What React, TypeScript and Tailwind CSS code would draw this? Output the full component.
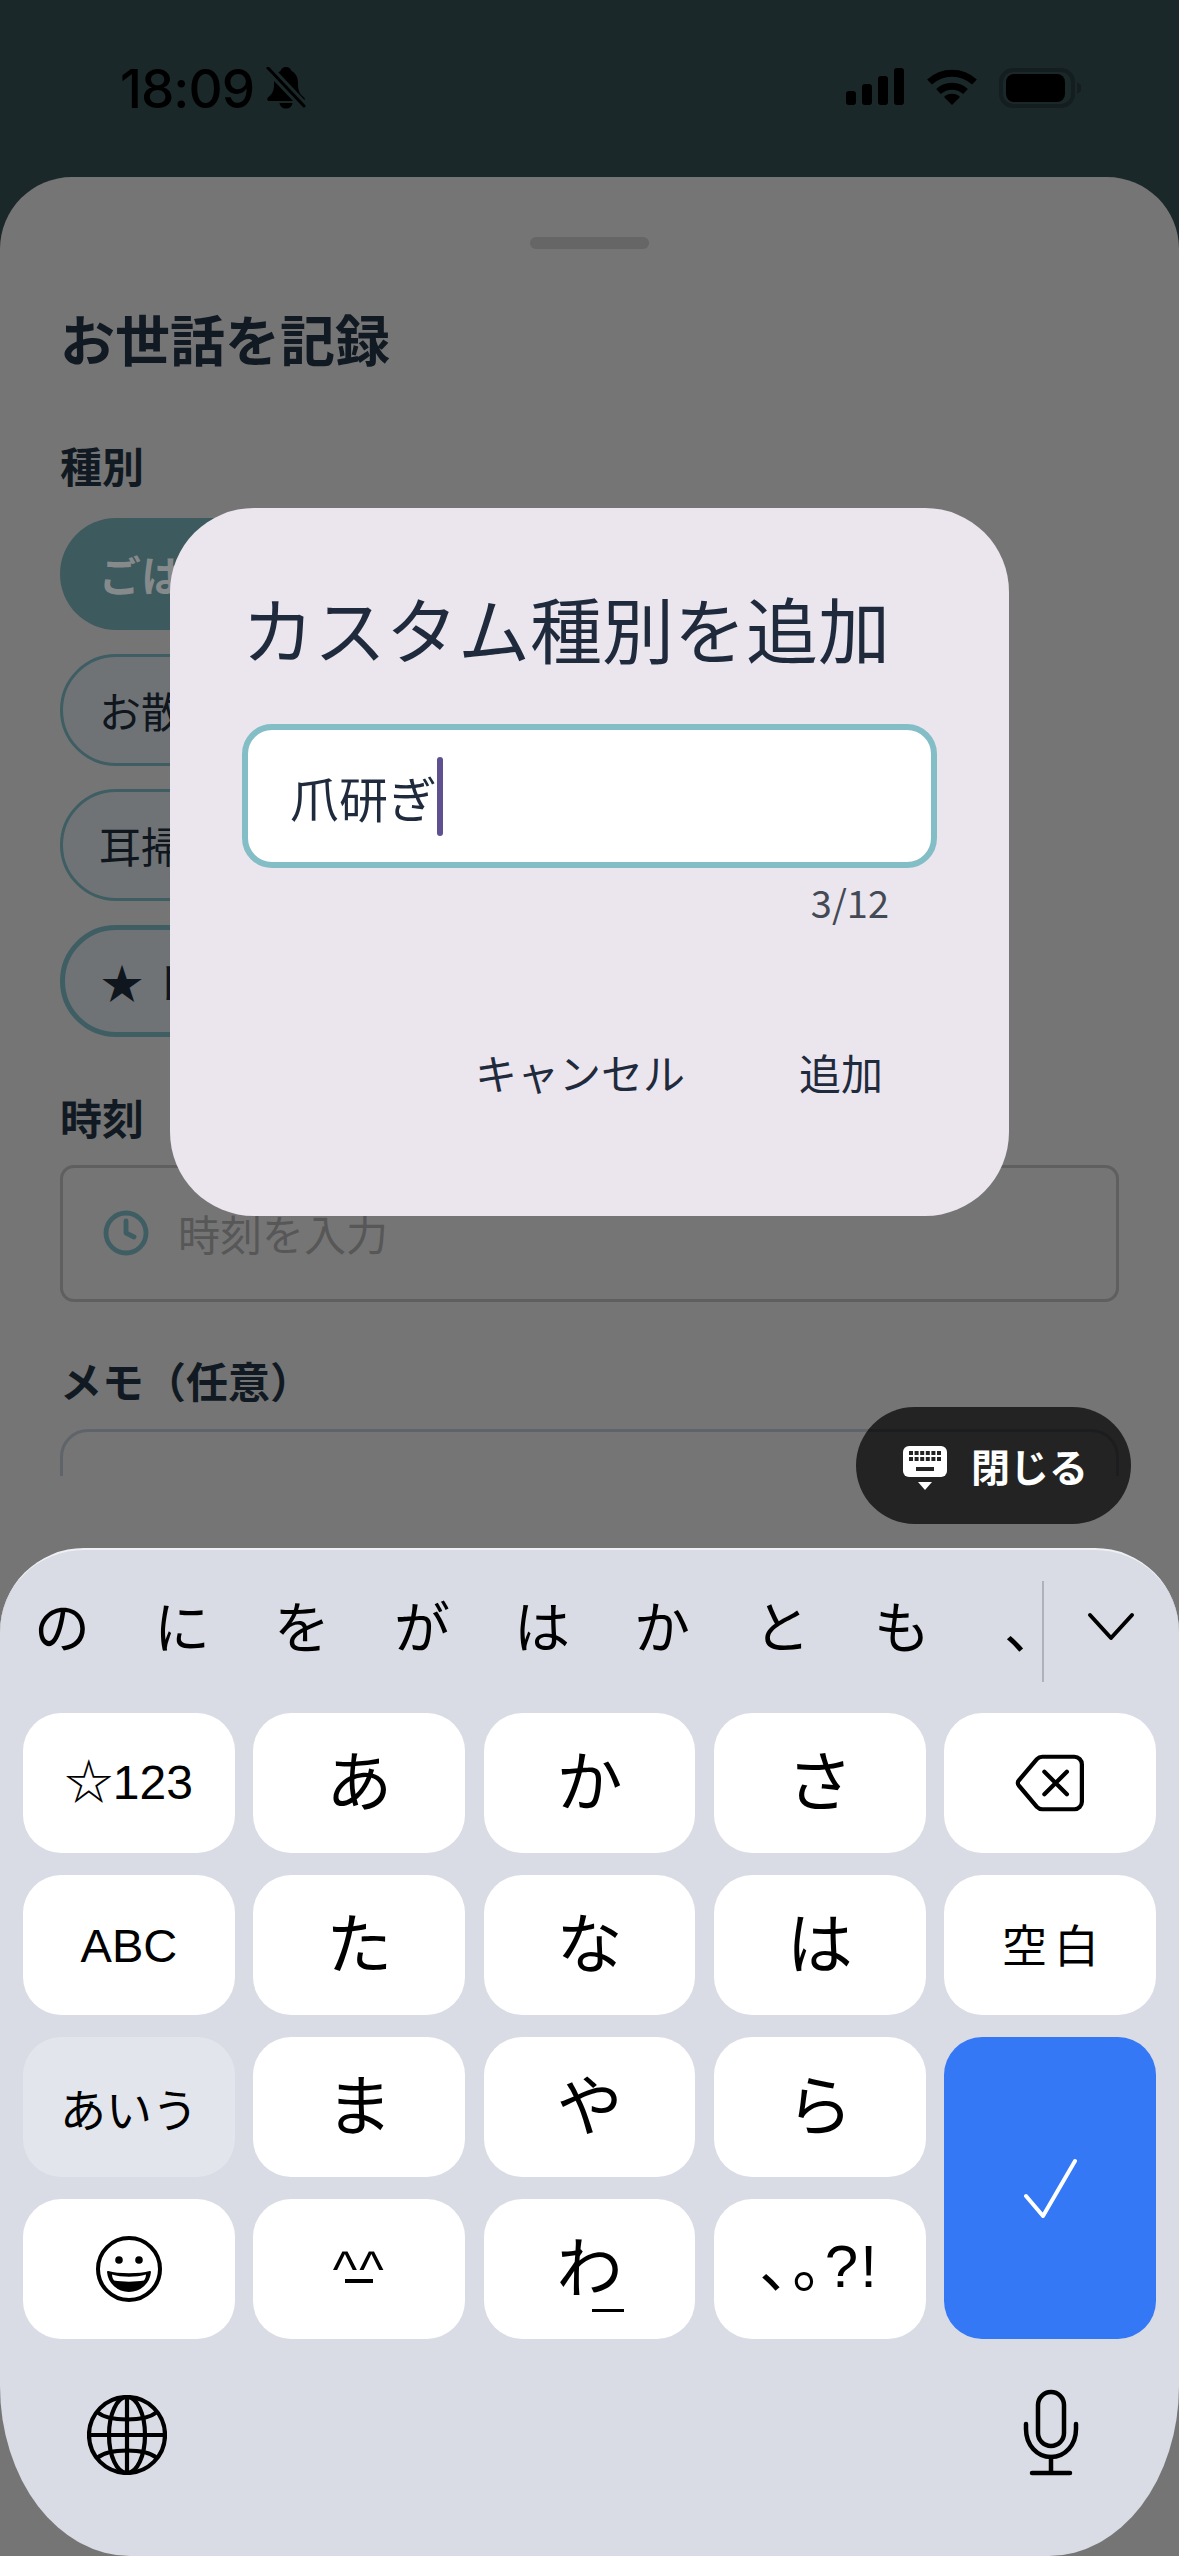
import React from "react";
import { Clock } from "lucide-react";

const jp = "font-['Noto_Sans_CJK_JP',sans-serif]";
const kb = "font-['Liberation_Sans','Noto_Sans_CJK_JP',sans-serif]";

function Chip({ children, filled, thick }: { children: React.ReactNode; filled?: boolean; thick?: boolean }) {
  const tone = filled
    ? "bg-[#3d5a5e] text-[#868a8b] font-bold pl-[39px]"
    : thick
      ? "bg-[#6f7375] border-[5px] border-[#3e5e63] text-[#10161d] pl-[36px]"
      : "bg-[#6f7375] border-[3px] border-[#3e5e63] text-[#10161d] pl-[36px]";
  return (
    <div className={`h-[112px] w-[420px] rounded-[56px] flex items-center text-[42px] leading-none ${tone}`}>
      {children}
    </div>
  );
}

function Key({ children, className = "" }: { children: React.ReactNode; className?: string }) {
  return (
    <div className={`h-[140px] rounded-[38px] flex items-center justify-center text-black ${className || "bg-white"}`}>
      {children}
    </div>
  );
}

const Kana = ({ c }: { c: string }) => <span className={`${jp} block -mt-[12px] text-[66px] leading-none`}>{c}</span>;

export default function App() {
  return (
    <div className={`${jp} relative w-[1179px] h-[2556px] overflow-hidden bg-[#1b2829] flex flex-col`}>
      {/* status bar */}
      <div className="h-[177px] shrink-0 flex justify-between items-start pt-[67px] pl-[120px] pr-[96px]">
        <div className="flex items-start gap-[12px]">
          <span className="font-['Inter',sans-serif] font-medium text-[53px] leading-[44px] tracking-[-1px] text-black">18:09</span>
          <svg width="40" height="42" viewBox="0 0 40 42">
            <path d="M20 0c-3 0-5 2-5.500 4C9 6.500 8 12 8 17c0 6-1 9.500-6 13.500-1.500 1.500-.5 3.500 1 3.500h34c1.500 0 2.500-2 1-3.500-5-4-6-7.500-6-13.500 0-5-1-10.500-6.500-13C25 2 23 0 20 0z" fill="#000" />
            <path d="M13.500 36a6.500 5.500 0 0 0 13 0z" fill="#000" />
            <path d="M1 0 L39 40" stroke="#1b2829" strokeWidth="9" />
            <path d="M2 1 L38 39" stroke="#000" strokeWidth="3" strokeLinecap="round" />
          </svg>
        </div>
        <div className="flex items-start gap-[21px] mt-[1px]">
          <svg width="58" height="38" viewBox="0 0 58 38" className="mr-[1px]">
            <rect x="0" y="23" width="10" height="14" rx="3" fill="#000" />
            <rect x="16" y="16" width="10" height="21" rx="3" fill="#000" />
            <rect x="32" y="8" width="10" height="29" rx="3" fill="#000" />
            <rect x="48" y="0" width="10" height="37" rx="3" fill="#000" />
          </svg>
          <svg width="52" height="38" viewBox="0 0 52 38">
            <path d="M3.500 14 A33 33 0 0 1 48.500 14" fill="none" stroke="#000" strokeWidth="7" />
            <path d="M12.500 23.500 A20 20 0 0 1 39.500 23.500" fill="none" stroke="#000" strokeWidth="7" />
            <path d="M26 37 L18 29 A11.500 11.500 0 0 1 34 29 Z" fill="#000" />
          </svg>
          <svg width="84" height="40" viewBox="0 0 84 40">
            <rect x="2" y="2" width="72" height="36" rx="12" fill="none" stroke="#141e20" strokeWidth="4" />
            <rect x="7" y="6" width="59" height="28" rx="8" fill="#000" />
            <path d="M78 14 L82 17 V23 L78 26 Z" fill="#141e20" />
          </svg>
        </div>
      </div>

      {/* sheet */}
      <div className="flex-1 rounded-t-[72px] bg-[#757575] flex flex-col overflow-hidden">
        <div className="h-[1299px] shrink-0 overflow-hidden px-[60px] flex flex-col">
          <div className="mt-[60px] mx-auto w-[119px] h-[12px] rounded-[6px] bg-[#666666] shrink-0" />
          <div className="mt-[63px] text-[55px] leading-[50px] font-bold text-[#111a22] shrink-0">お世話を記録</div>
          <div className="mt-[83px] text-[42px] leading-[40px] font-bold text-[#111a22] shrink-0">種別</div>
          <div className="mt-[33px] flex flex-col gap-[23.500px] shrink-0">
            <Chip filled>ごはん</Chip>
            <Chip>お散歩</Chip>
            <Chip>耳掃除</Chip>
            <Chip thick>★ トリミング</Chip>
          </div>
          <div className="mt-[60px] text-[42px] leading-[40px] font-bold text-[#111a22] shrink-0">時刻</div>
          <div className="mt-[28px] h-[137px] shrink-0 rounded-[14px] border-[3px] border-[#5f5f5f] flex items-center pl-[39px] gap-[28px]">
            <Clock size={48} strokeWidth={2.4} className="text-[#3e5e63]" />
            <span className="text-[42px] leading-none text-[#575757]">時刻を入力</span>
          </div>
          <div className="mt-[58px] text-[42px] leading-[40px] font-bold text-[#111a22] shrink-0">メモ（任意）</div>
          <div className="mt-[29px] h-[200px] shrink-0 rounded-[28px] border-[3px] border-[#5f636a]" />
        </div>

        <div className="h-[72px] shrink-0" />

        {/* keyboard */}
        <div className="flex-1 bg-[#d9dce5] border-t-2 border-[#eef0f4] [border-radius:84px_84px_130px_130px/84px_84px_170px_170px] flex flex-col">
          <div className="h-[163px] shrink-0 flex items-center pl-[2px] text-black">
            <div className="flex w-[1040px] pb-[16px]">
              {["の", "に", "を", "が", "は", "か", "と", "も"].map((c) => (
                <span key={c} className="w-[120px] text-center text-[56px] leading-none">{c}</span>
              ))}
              <span className="w-[80px] pl-[42px] text-[56px] leading-none">、</span>
            </div>
            <div className="w-[2px] h-[101px] bg-[#aeb2bc]" />
            <svg width="48" height="30" viewBox="0 0 48 30" className="ml-[43px] mb-[10px]">
              <path d="M3 3 L24 26 L45 3" fill="none" stroke="#000" strokeWidth="4" strokeLinecap="round" strokeLinejoin="round" />
            </svg>
          </div>

          <div className="px-[23px] grid grid-cols-5 gap-x-[18.500px] gap-y-[22px]">
            <Key><span className={`${kb} text-[48px] leading-none`}>☆123</span></Key>
            <Key><Kana c="あ" /></Key>
            <Key><Kana c="か" /></Key>
            <Key><Kana c="さ" /></Key>
            <Key>
              <svg width="72" height="60" viewBox="0 0 76 64">
                <path d="M30 4 H64 a8 8 0 0 1 8 8 V52 a8 8 0 0 1 -8 8 H30 a8 8 0 0 1 -6 -2.500 L5 35 a4 4 0 0 1 0 -6 L24 6.500 a8 8 0 0 1 6 -2.500Z" fill="none" stroke="#000" strokeWidth="4.500" />
                <path d="M32 20 L56 44 M56 20 L32 44" stroke="#000" strokeWidth="4.500" strokeLinecap="round" />
              </svg>
            </Key>

            <Key><span className={`${kb} text-[47px] leading-none`}>ABC</span></Key>
            <Key><Kana c="た" /></Key>
            <Key><Kana c="な" /></Key>
            <Key><Kana c="は" /></Key>
            <Key><span className="block -mt-[4px] pl-[8px] text-[45px] leading-none tracking-[7px]">空白</span></Key>

            <Key className="bg-[#e3e5ec]"><span className="text-[46px] leading-none">あいう</span></Key>
            <Key><Kana c="ま" /></Key>
            <Key><Kana c="や" /></Key>
            <Key><Kana c="ら" /></Key>
            <div className="row-span-2 rounded-[38px] bg-[#3478f6] flex items-center justify-center">
              <svg width="60" height="60" viewBox="0 0 60 60">
                <path d="M6 38 L23 58 L55 3" fill="none" stroke="#fff" strokeWidth="4" strokeLinecap="round" strokeLinejoin="round" />
              </svg>
            </div>

            <Key>
              <svg width="68" height="68" viewBox="0 0 68 68">
                <circle cx="34" cy="34" r="31" fill="none" stroke="#000" strokeWidth="4" />
                <circle cx="24" cy="25" r="3.800" fill="#000" />
                <circle cx="44" cy="25" r="3.800" fill="#000" />
                <path d="M13 37 C24 40 44 40 55 37 C54 48 45 56 34 56 C23 56 14 48 13 37 Z" fill="#000" stroke="#000" strokeWidth="2" strokeLinejoin="round" />
                <path d="M17 39.500 C27 42.500 41 42.500 51 39.500 C51 42 50 44 49 45.500 C40 47 28 47 19 45.500 C18 44 17 42 17 39.500 Z" fill="#fff" />
              </svg>
            </Key>
            <Key>
              <span className={`${kb} flex flex-col items-center mb-[12px] text-[52px] leading-none`}>
                <span className="h-[36px] tracking-[2px]">^^</span>
                <span className="w-[28px] h-[4px] bg-black" />
              </span>
            </Key>
            <Key>
              <span className="relative">
                <Kana c="わ" />
                <span className="absolute left-[36px] bottom-[-16px] w-[32px] h-[3px] bg-black" />
              </span>
            </Key>
            <Key><span className={`${kb} block -mt-[4px] text-[60px] leading-none tracking-[2px]`}>､｡?!</span></Key>
          </div>

          <div className="flex-1 flex items-start justify-between pl-[87px] pr-[98px]">
            <svg width="80" height="80" viewBox="0 0 80 80" className="mt-[56px]">
              <g fill="none" stroke="#000" strokeWidth="4.200">
                <circle cx="40" cy="40" r="38" />
                <ellipse cx="40" cy="40" rx="18" ry="38" />
                <path d="M40 2 V78 M2 40 H78" />
                <path d="M10 17 C22 27 58 27 70 17 M10 63 C22 53 58 53 70 63" />
              </g>
            </svg>
            <svg width="60" height="90" viewBox="0 0 60 90" className="mt-[50px]">
              <g fill="none" stroke="#000" strokeWidth="4.500" strokeLinecap="round">
                <rect x="17" y="3" width="26" height="54" rx="13" />
                <path d="M5 35 V40 C5 56 16 68 30 68 C44 68 55 56 55 40 V35" />
                <path d="M30 68 V84 M11 84 H49" />
              </g>
            </svg>
          </div>
        </div>
      </div>

      {/* dialog overlay */}
      <div className="absolute left-[170px] top-[508px] w-[839px] h-[708px] rounded-[84px] bg-[#ebe6ee] px-[72px] flex flex-col text-[#1f2b3d]">
        <div className="mt-[83px] text-[72px] leading-[72px] whitespace-nowrap">カスタム種別を追加</div>
        <div className="mt-[61px] h-[144px] shrink-0 rounded-[30px] border-[6px] border-[#83bdc6] bg-white flex items-center pl-[42px]">
          <span className="text-[49px] leading-none">爪研ぎ</span>
          <span className="w-[6px] h-[79px] rounded-[3px] bg-[#5f5190]" />
        </div>
        <div className="mt-[14px] pr-[48px] text-right text-[38px] leading-[40px] text-[#444a55]">3/12</div>
        <div className="mt-[128px] pr-[54px] flex justify-end gap-[114px] text-[42px] leading-[44px]">
          <span>キャンセル</span>
          <span>追加</span>
        </div>
      </div>

      {/* keyboard dismiss pill */}
      <div className="absolute left-[856px] top-[1407px] w-[275px] h-[117px] rounded-full bg-black/70 flex items-center pl-[47px] gap-[24px]">
        <svg width="44" height="46" viewBox="0 0 44 46" className="mt-[6px]">
          <path d="M6 0 H38 a6 6 0 0 1 6 6 V25 a6 6 0 0 1 -6 6 H6 a6 6 0 0 1 -6 -6 V6 a6 6 0 0 1 6 -6Z" fill="#fff" />
          <path d="M6 7 h32 M6 13 h32" stroke="#232323" strokeWidth="4" strokeDasharray="4 1.600" />
          <rect x="13" y="21" width="18" height="4" fill="#232323" />
          <path d="M15 36 H29 L22 44 Z" fill="#fff" />
        </svg>
        <span className="text-[39px] leading-none font-bold text-white">閉じる</span>
      </div>
    </div>
  );
}
